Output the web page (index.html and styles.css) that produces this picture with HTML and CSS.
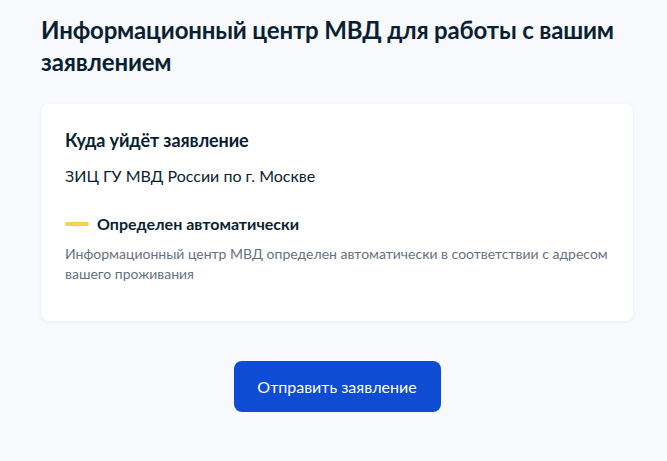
FILE: index.html
```html
<!DOCTYPE html>
<html lang="ru">
<head>
<meta charset="utf-8">
<link rel="stylesheet" href="styles.css">
</head>
<body>
<main class="page">
  <h1 class="title">Информационный центр МВД для работы с вашим заявлением</h1>
  <section class="card">
    <h2 class="card-title">Куда уйдёт заявление</h2>
    <p class="org">ЗИЦ ГУ МВД России по г. Москве</p>
    <div class="status">
      <span class="dash"></span>
      <span class="status-text">Определен автоматически</span>
    </div>
    <p class="note">Информационный центр МВД определен автоматически в соответствии с адресом вашего проживания</p>
  </section>
  <div class="actions">
    <button class="btn" type="button">Отправить заявление</button>
  </div>
</main>
</body>
</html>
```
FILE: styles.css
```css
html, body {
  margin: 0;
  padding: 0;
  background: #f7f9fc;
}
body {
  font-family: Lato, "Noto Sans", sans-serif;
  color: #0b1f33;
}
.page {
  width: 592px;
  margin: 0 auto 0 41px;
  padding-top: 14px;
}
.title {
  margin: 0;
  font-size: 24px;
  line-height: 32px;
  font-weight: 700;
  letter-spacing: -0.17px;
  color: #0b1f33;
}
.card {
  margin-top: 26px;
  background: #fff;
  border-radius: 8px;
  box-shadow: 0 1px 4px rgba(0, 32, 80, 0.06);
  padding: 24px 24px 37px;
}
.card-title {
  margin: 0;
  font-size: 18px;
  line-height: 24px;
  font-weight: 700;
  letter-spacing: -0.1px;
}
.org {
  margin: 12px 0 0;
  font-size: 16px;
  line-height: 24px;
}
.status {
  margin-top: 24px;
  display: flex;
  align-items: center;
  gap: 8px;
}
.dash {
  width: 24px;
  height: 4px;
  border-radius: 2px;
  background: #f2d24e;
}
.status-text {
  font-size: 16px;
  line-height: 24px;
  font-weight: 700;
}
.note {
  margin: 8px 0 0;
  font-size: 14px;
  line-height: 20px;
  color: #66727f;
}
.actions {
  display: flex;
  justify-content: center;
  margin-top: 40px;
}
.btn {
  font-family: Lato, "Noto Sans", sans-serif;
  background: #0d4cd3;
  color: #fff;
  border: none;
  border-radius: 8px;
  width: 207px;
  height: 51px;
  font-size: 16px;
  cursor: pointer;
}
```
